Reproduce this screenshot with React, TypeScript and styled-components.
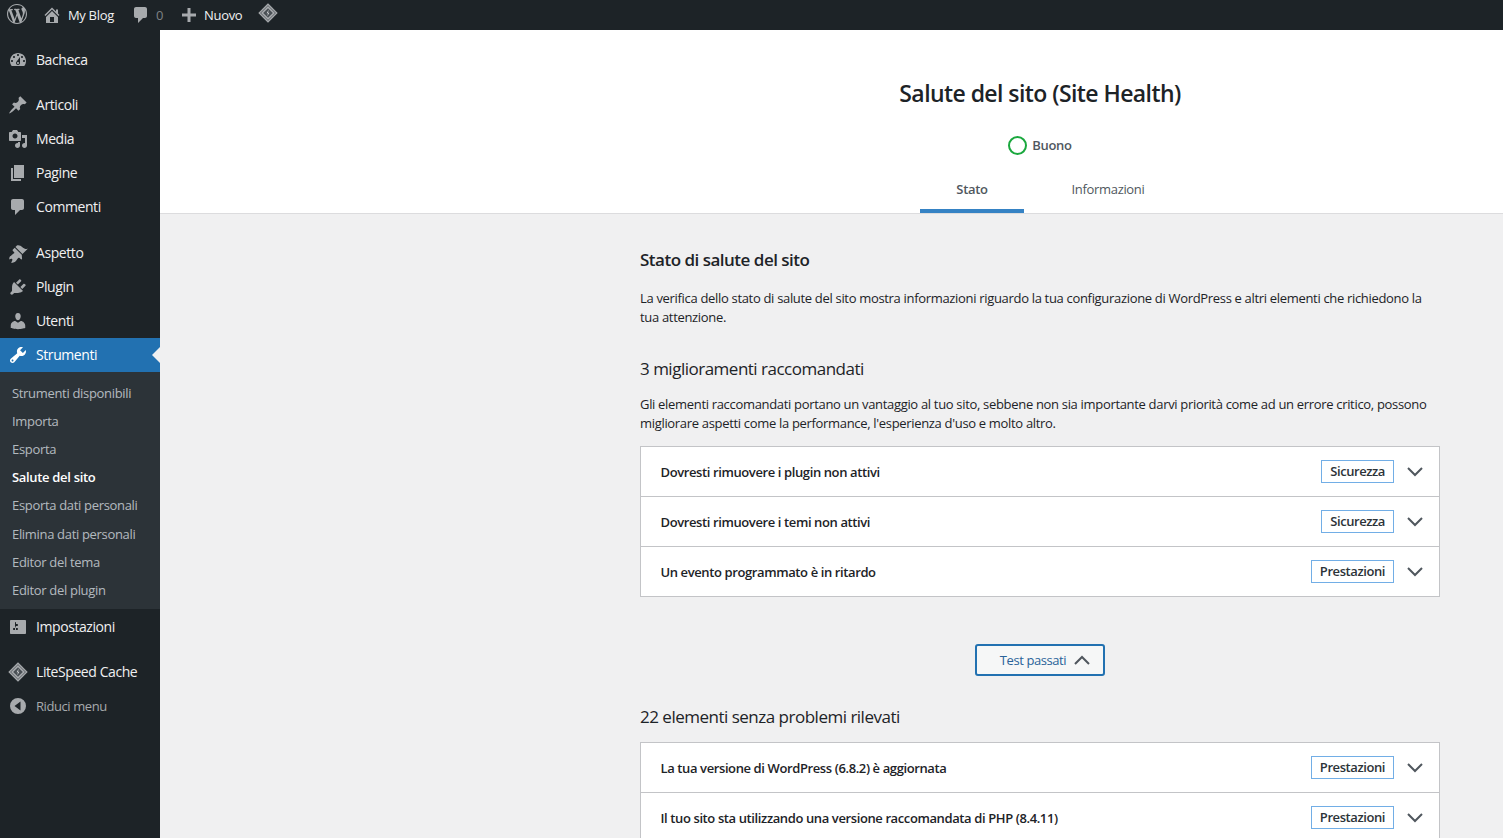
import React from "react";
import styled, { createGlobalStyle } from "styled-components";

const FONT = `"Open Sans", "Noto Sans", "Liberation Sans", sans-serif`;

const Global = createGlobalStyle`
  html, body { margin: 0; padding: 0; height: 100%; overflow: hidden; background: #f0f0f1; }
  * { box-sizing: border-box; }
  body { font-family: ${FONT}; font-size: 13px; letter-spacing: -0.32px; color: #1d2327; }
`;

const D = {
  wp: "M20 10c0-5.51-4.49-10-10-10C4.48 0 0 4.49 0 10c0 5.52 4.48 10 10 10 5.51 0 10-4.48 10-10zM7.78 15.37L4.37 6.22c.55-.02 1.17-.08 1.17-.08.5-.06.44-1.13-.06-1.11 0 0-1.45.11-2.37.11-.18 0-.37 0-.58-.01C4.12 2.69 6.87 1.11 10 1.11c2.33 0 4.45.87 6.05 2.34-.68-.11-1.65.39-1.65 1.58 0 .74.45 1.36.9 2.1.35.61.55 1.36.55 2.46 0 1.49-1.4 5-1.4 5l-3.03-8.37c.54-.02.82-.17.82-.17.5-.05.44-1.25-.06-1.22 0 0-1.44.12-2.38.12-.87 0-2.33-.12-2.33-.12-.5-.03-.56 1.2-.06 1.22l.92.08 1.26 3.41zM17.41 10c.24-.64.74-1.87.43-4.25.7 1.29 1.05 2.71 1.05 4.25 0 3.29-1.73 6.24-4.4 7.78.97-2.59 1.94-5.2 2.92-7.78zM6.1 18.09C3.12 16.65 1.11 13.53 1.11 10c0-1.3.23-2.48.72-3.59C3.25 10.3 4.67 14.2 6.1 18.09zm4.03-6.63l2.58 6.98c-.86.29-1.76.45-2.71.45-.79 0-1.57-.11-2.29-.33.81-2.38 1.62-4.74 2.42-7.1z",
  home: "M16 8.5l1.53 1.53-1.06 1.06L10 4.62l-6.47 6.47-1.06-1.06L10 2.5l4 4v-2h2v4zm-6-2.46l6 5.99V18H4v-5.97zM12 17v-5H8v5h4z",
  comment: "M5 2h9c1.1 0 2 .9 2 2v7c0 1.1-.9 2-2 2h-2l-5 5v-5H5c-1.1 0-2-.9-2-2V4c0-1.1.9-2 2-2z",
  plus: "M17 8.5v3h-5.5V17h-3v-5.5H3v-3h5.5V3h3v5.5H17z",
  dashboard: "M3.76 16h12.48c1.1-1.37 1.76-3.11 1.76-5 0-4.42-3.58-8-8-8s-8 3.58-8 8c0 1.89.66 3.63 1.76 5zM10 4c.55 0 1 .45 1 1s-.45 1-1 1-1-.45-1-1 .45-1 1-1zM6 6c.55 0 1 .45 1 1s-.45 1-1 1-1-.45-1-1 .45-1 1-1zm8 0c.55 0 1 .45 1 1s-.45 1-1 1-1-.45-1-1 .45-1 1-1zm-5.37 5.55L12 7v6c0 1.1-.9 2-2 2s-2-.9-2-2c0-.57.24-1.08.63-1.45zM4 10c.55 0 1 .45 1 1s-.45 1-1 1-1-.45-1-1 .45-1 1-1zm12 0c.55 0 1 .45 1 1s-.45 1-1 1-1-.45-1-1 .45-1 1-1zm-5 3c0-.55-.45-1-1-1s-1 .45-1 1 .45 1 1 1 1-.45 1-1z",
  post: "M10.44 3.02l1.82-1.82 6.36 6.35-1.83 1.82c-1.05-.68-2.48-.57-3.41.36l-.75.75c-.92.93-1.04 2.35-.35 3.41l-1.83 1.82-2.41-2.41-2.8 2.79c-.42.42-3.38 2.71-3.8 2.29s1.86-3.39 2.28-3.81l2.79-2.79L4.1 9.36l1.83-1.82c1.05.69 2.48.57 3.4-.36l.75-.75c.93-.92 1.05-2.35.36-3.41z",
  media: "M13 11V4c0-.55-.45-1-1-1h-1.67L9 1H5L3.67 3H2c-.55 0-1 .45-1 1v7c0 .55.45 1 1 1h10c.55 0 1-.45 1-1zM7 4.5c1.38 0 2.5 1.12 2.5 2.5S8.38 9.5 7 9.5 4.5 8.38 4.5 7 5.62 4.5 7 4.5zM14 6h5v10.5c0 1.38-1.12 2.5-2.5 2.5S14 17.88 14 16.5s1.12-2.5 2.5-2.5c.17 0 .34.02.5.05V9h-3V6zm-4 8.05V13h2v3.5c0 1.38-1.12 2.5-2.5 2.5S7 17.88 7 16.5 8.12 14 9.5 14c.17 0 .34.02.5.05z",
  page: "M6 15V2h10v13H6zm-1 1h8v2H3V5h2v11z",
  appearance: "M14.48 11.06L7.41 3.99l1.5-1.5c.5-.56 2.3-.47 3.51.32 1.21.8 1.43 1.28 2.91 2.1 1.18.64 2.45 1.26 4.45.85zm-.71.71L6.7 4.7 4.93 6.47c-.39.39-.39 1.02 0 1.41l1.06 1.06c.39.39.39 1.03 0 1.42-.6.6-1.43 1.11-2.21 1.69-.35.26-.7.53-1.01.84C1.43 13.23.91 15.66 1.5 16.5c.8-.83 1.98-1.06 2.66-.47.59.84-.37 2.79-1.13 3.5.84.59 3.27.07 4.63-1.27.3-.31.58-.66.84-1.01.58-.78 1.09-1.61 1.69-2.21.39-.39 1.03-.39 1.42 0l1.06 1.06c.39.39 1.02.39 1.41 0z",
  plugin: "M13.11 4.36L9.87 7.6 8 5.73l3.24-3.24c.35-.34 1.05-.2 1.56.32.52.51.66 1.21.31 1.55zm-8 1.77l.91-1.12 9.01 9.01-1.19.84c-.71.71-2.63 1.16-3.82 1.16H6.14L4.9 17.26c-.59.59-1.54.59-2.12 0-.59-.58-.59-1.53 0-2.12l1.24-1.24v-3.88c0-1.13.4-3.19 1.09-3.89zm7.26 3.97l3.24-3.24c.34-.35 1.04-.21 1.55.31.52.51.66 1.21.31 1.55l-3.24 3.25z",
  users: "M10 9.25c-2.27 0-2.73-3.44-2.73-3.44C7 4.02 7.82 2 9.97 2c2.16 0 2.98 2.02 2.71 3.81 0 0-.41 3.44-2.68 3.44zm0 2.57L12.72 10c2.39 0 4.52 2.33 4.52 4.53v2.49s-3.65 1.13-7.24 1.13c-3.65 0-7.24-1.13-7.24-1.13v-2.49c0-2.25 1.94-4.48 4.47-4.48z",
  tools: "M16.68 9.77c-1.34 1.34-3.3 1.67-4.95.99l-5.41 6.52c-.99.99-2.59.99-3.58 0s-.99-2.59 0-3.57l6.52-5.42c-.68-1.65-.35-3.61.99-4.95 1.28-1.28 3.12-1.62 4.72-1.06l-2.89 2.89 2.82 2.82 2.86-2.87c.53 1.58.18 3.39-1.08 4.65zM3.81 16.21c.4.39 1.04.39 1.43 0 .4-.4.4-1.04 0-1.43-.39-.4-1.03-.4-1.43 0-.39.39-.39 1.03 0 1.43z",
  settings: "M18 16V4c0-.55-.45-1-1-1H3c-.55 0-1 .45-1 1v12c0 .55.45 1 1 1h14c.55 0 1-.45 1-1zM8 11h1c.55 0 1 .45 1 1s-.45 1-1 1H8v1.5c0 .28-.22.5-.5.5s-.5-.22-.5-.5V13H6c-.55 0-1-.45-1-1s.45-1 1-1h1V5.5c0-.28.22-.5.5-.5s.5.22.5.5V7h1c.55 0 1 .45 1 1s-.45 1-1 1h-1v5.5c0 .28-.22.5-.5.5s-.5-.22-.5-.5V9z",
  collapse: "M18 10a8 8 0 1 1-16 0 8 8 0 0 1 16 0zM12.5 5.5L6.5 10l6 4.5z",
};

const Glyph = ({ d, size = 20 }: { d: string; size?: number }) => (
  <svg width={size} height={size} viewBox="0 0 20 20" fill="currentColor" fillRule="evenodd" aria-hidden="true">
    <path d={d} />
  </svg>
);

const Diamond = ({ size = 20 }: { size?: number }) => (
  <svg width={size} height={size} viewBox="0 0 20 20" aria-hidden="true">
    <path d="M10 .3 19.7 10 10 19.7.3 10z" fill="currentColor" />
    <path d="M10 2.2 17.8 10 10 17.8 2.2 10z" fill="#4a5055" />
    <path d="M10 3 17 10 10 17 3 10z" fill="#a7aaad" />
    <path d="M10 5.2 14.8 10 10 14.8 5.2 10z" fill="#4a5055" />
    <path d="M10.8 6.6 8.6 10.3h1.4L9.2 13.4l2.2-3.7H10z" fill="#d0d2d4" />
  </svg>
);

const Shell = styled.div`
  display: grid;
  grid-template-columns: 160px 1fr;
  grid-template-rows: 30px 1fr;
  height: 100vh;
  overflow: hidden;
`;

const TopBar = styled.header`
  grid-column: 1 / 3;
  background: #1d2327;
  display: flex;
  align-items: center;
  color: #f0f0f1;
  font-size: 13px;
`;

const BarLogo = styled.span`
  display: flex;
  color: #a7aaad;
  margin-left: 7px;
  margin-right: 15px;
  margin-top: -2px;
`;

const BarItem = styled.span<{ $gap: number; $after: number }>`
  display: flex;
  align-items: center;
  gap: ${(p) => p.$gap}px;
  margin-right: ${(p) => p.$after}px;
  line-height: 30px;
  svg { color: #a7aaad; }
`;

const BarCount = styled.span`
  color: #a7aaad;
  opacity: 0.7;
`;

const BarDiamond = styled.span`
  display: flex;
  color: #a7aaad;
  margin-top: -4px;
`;

const Sidebar = styled.nav`
  background: #1d2327;
  padding-top: 13px;
  display: flex;
  flex-direction: column;
  overflow: hidden;
`;

const MenuItem = styled.div<{ $active?: boolean; $top?: number; $dim?: boolean }>`
  position: relative;
  flex: none;
  height: 34px;
  display: flex;
  align-items: center;
  gap: 8px;
  padding-left: 8px;
  margin-top: ${(p) => p.$top ?? 0}px;
  background: ${(p) => (p.$active ? "#2271b1" : "transparent")};
  color: ${(p) => (p.$active ? "#fff" : p.$dim ? "#a7aaad" : "#f0f0f1")};
  svg { color: ${(p) => (p.$active ? "#fff" : "#a7aaad")}; flex: none; }
  &::after {
    content: "";
    display: ${(p) => (p.$active ? "block" : "none")};
    position: absolute;
    right: 0;
    top: 9px;
    border: 8px solid transparent;
    border-right-color: #f0f0f1;
    border-left-width: 0;
  }
`;

const MenuLabel = styled.span<{ $small?: boolean }>`
  font-size: ${(p) => (p.$small ? 13 : 14)}px;
  letter-spacing: -0.42px;
  padding-bottom: ${(p) => (p.$small ? 0 : 2)}px;
`;

const SubMenu = styled.div`
  flex: none;
  background: #2c3338;
  padding-top: 6.6px;
  height: 237px;
  margin-bottom: 1px;
`;

const SubItem = styled.div<{ $current?: boolean }>`
  height: 28.2px;
  line-height: 28.2px;
  padding-left: 12px;
  font-size: 13px;
  color: ${(p) => (p.$current ? "#fff" : "rgba(240,246,252,.7)")};
  font-weight: ${(p) => (p.$current ? 600 : 400)};
`;

const Main = styled.main`
  overflow: hidden;
  min-width: 0;
`;

const Header = styled.div`
  background: #fff;
  height: 184px;
  border-bottom: 1px solid #dcdcde;
  padding: 0 63px 0 480px;
  display: flex;
  flex-direction: column;
  align-items: center;
`;

const Title = styled.h1`
  margin: 46px 0 0;
  font-size: 23px;
  line-height: 34px;
  font-weight: 600;
  letter-spacing: -0.57px;
`;

const Score = styled.div`
  display: flex;
  align-items: center;
  gap: 5px;
  margin-top: 23px;
  height: 24px;
  font-weight: 600;
  color: #50575e;
`;

const Ring = styled.span`
  width: 19px;
  height: 19px;
  border-radius: 50%;
  border: 2px solid #1aa83e;
`;

const Tabs = styled.div`
  display: flex;
  margin: 12px 0 0 32px;
`;

const Tab = styled.div<{ $active?: boolean; $w: number }>`
  width: ${(p) => p.$w}px;
  height: 44px;
  text-align: center;
  line-height: 40px;
  color: #50575e;
  font-weight: ${(p) => (p.$active ? 600 : 400)};
  border-bottom: 4px solid ${(p) => (p.$active ? "#3582c4" : "transparent")};
`;

const Body = styled.div`
  width: 800px;
  margin-left: 480px;
  padding-top: 33px;
  line-height: 19px;
`;

const H2 = styled.h2`
  margin: 0;
  font-size: 17px;
  line-height: 25px;
  font-weight: 600;
  letter-spacing: -0.5px;
`;

const H3 = styled.h3<{ $top: number }>`
  margin: ${(p) => p.$top}px 0 0;
  font-size: 17px;
  line-height: 26px;
  font-weight: 400;
  letter-spacing: -0.5px;
`;

const Para = styled.p<{ $top: number }>`
  margin: ${(p) => p.$top}px 0 0;
  color: #1d2327;
`;

const Accordion = styled.div<{ $top: number }>`
  margin-top: ${(p) => p.$top}px;
  background: #fff;
  border: 1px solid #c3c4c7;
`;

const Row = styled.div`
  height: 49px;
  display: flex;
  align-items: center;
  padding: 0 16px 0 19.5px;
  font-weight: 600;
  letter-spacing: -0.39px;
  & + & { height: 50px; border-top: 1px solid #c3c4c7; }
`;

const RowTitle = styled.span`
  flex: 1;
  color: #1d2327;
  padding-top: 2px;
`;

const Badge = styled.span`
  border: 1px solid #72aee6;
  padding: 0 8px;
  height: 23px;
  line-height: 21px;
  color: #2c3338;
  font-weight: 600;
  letter-spacing: -0.42px;
  margin-right: 13px;
`;

const ChevronIcon = styled.svg`
  flex: none;
  fill: none;
  stroke: #50575e;
  stroke-width: 2;
`;

const Chevron = ({ up }: { up?: boolean }) => (
  <ChevronIcon width="16" height="10" viewBox="0 0 16 10" aria-hidden="true">
    <path d={up ? "M1 9 8 2l7 7" : "M1 1l7 7 7-7"} />
  </ChevronIcon>
);

const Center = styled.div`
  display: flex;
  justify-content: center;
  margin-top: 47px;
`;

const PassedButton = styled.button`
  width: 130px;
  height: 32px;
  display: flex;
  align-items: center;
  justify-content: center;
  gap: 8px;
  padding: 0 0 0 10px;
  background: #f6f7f7;
  border: 2px solid #2271b1;
  border-radius: 3px;
  font: inherit;
  letter-spacing: -0.42px;
  color: #2a6399;
`;

const top = [
  { d: D.post, label: "Articoli", t: 11 },
  { d: D.media, label: "Media" },
  { d: D.page, label: "Pagine" },
  { d: D.comment, label: "Commenti" },
  { d: D.appearance, label: "Aspetto", t: 12 },
  { d: D.plugin, label: "Plugin" },
  { d: D.users, label: "Utenti" },
];

const subs = ["Strumenti disponibili", "Importa", "Esporta", "Salute del sito", "Esporta dati personali", "Elimina dati personali", "Editor del tema", "Editor del plugin"];

const recommended = [
  ["Dovresti rimuovere i plugin non attivi", "Sicurezza"],
  ["Dovresti rimuovere i temi non attivi", "Sicurezza"],
  ["Un evento programmato è in ritardo", "Prestazioni"],
];

const passed = [
  ["La tua versione di WordPress (6.8.2) è aggiornata", "Prestazioni"],
  ["Il tuo sito sta utilizzando una versione raccomandata di PHP (8.4.11)", "Prestazioni"],
];

const Rows = ({ items }: { items: string[][] }) => (
  <>
    {items.map(([t, b]) => (
      <Row key={t}>
        <RowTitle>{t}</RowTitle>
        <Badge>{b}</Badge>
        <Chevron />
      </Row>
    ))}
  </>
);

export default function App() {
  return (
    <Shell>
      <Global />
      <TopBar>
        <BarLogo><Glyph d={D.wp} /></BarLogo>
        <BarItem $gap={6} $after={17}><Glyph d={D.home} />My Blog</BarItem>
        <BarItem $gap={5} $after={16}><Glyph d={D.comment} /><BarCount>0</BarCount></BarItem>
        <BarItem $gap={5} $after={16}><Glyph d={D.plus} />Nuovo</BarItem>
        <BarDiamond><Diamond /></BarDiamond>
      </TopBar>
      <Sidebar>
        <MenuItem><Glyph d={D.dashboard} /><MenuLabel>Bacheca</MenuLabel></MenuItem>
        {top.map((m) => (
          <MenuItem key={m.label} $top={m.t}><Glyph d={m.d} /><MenuLabel>{m.label}</MenuLabel></MenuItem>
        ))}
        <MenuItem $active><Glyph d={D.tools} /><MenuLabel>Strumenti</MenuLabel></MenuItem>
        <SubMenu>
          {subs.map((s) => (
            <SubItem key={s} $current={s === "Salute del sito"}>{s}</SubItem>
          ))}
        </SubMenu>
        <MenuItem><Glyph d={D.settings} /><MenuLabel>Impostazioni</MenuLabel></MenuItem>
        <MenuItem $top={11}><Diamond /><MenuLabel>LiteSpeed Cache</MenuLabel></MenuItem>
        <MenuItem $dim><Glyph d={D.collapse} /><MenuLabel $small>Riduci menu</MenuLabel></MenuItem>
      </Sidebar>
      <Main>
        <Header>
          <Title>Salute del sito (Site Health)</Title>
          <Score><Ring />Buono</Score>
          <Tabs>
            <Tab $active $w={104}>Stato</Tab>
            <Tab $w={168}>Informazioni</Tab>
          </Tabs>
        </Header>
        <Body>
          <H2>Stato di salute del sito</H2>
          <Para $top={17}>La verifica dello stato di salute del sito mostra informazioni riguardo la tua configurazione di WordPress e altri elementi che richiedono la tua attenzione.</Para>
          <H3 $top={29}>3 miglioramenti raccomandati</H3>
          <Para $top={13}>Gli elementi raccomandati portano un vantaggio al tuo sito, sebbene non sia importante darvi priorità come ad un errore critico, possono migliorare aspetti come la performance, l'esperienza d'uso e molto altro.</Para>
          <Accordion $top={13}><Rows items={recommended} /></Accordion>
          <Center><PassedButton>Test passati<Chevron up /></PassedButton></Center>
          <H3 $top={28}>22 elementi senza problemi rilevati</H3>
          <Accordion $top={12}><Rows items={passed} /></Accordion>
        </Body>
      </Main>
    </Shell>
  );
}
